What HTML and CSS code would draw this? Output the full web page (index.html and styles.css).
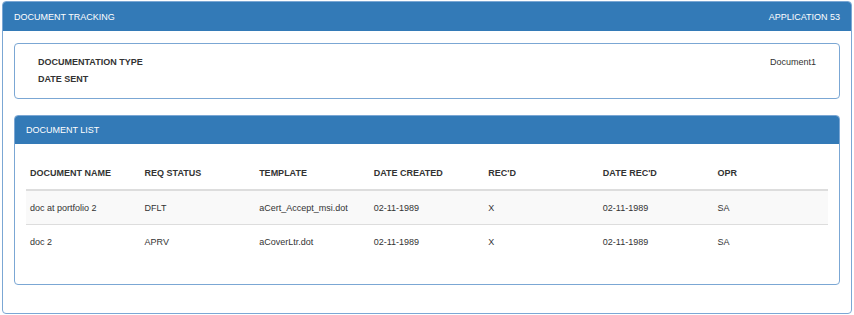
FILE: index.html
```html
<!DOCTYPE html>
<html lang="en">

<head>
    <meta charset="UTF-8">
    <meta name="viewport" content="width=device-width, initial-scale=1.0">
    <title>Document Tracking</title>
    <link rel="stylesheet" href="styles.css">
</head>

<body>

    <div class="panel panel-outer">
        <div class="panel-heading">
            <span>DOCUMENT TRACKING</span>
            <span>APPLICATION 53</span>
        </div>
        <div class="panel-body">

            <div class="panel panel-info">
                <div class="info-body">
                    <div class="info-row">
                        <span class="label">DOCUMENTATION TYPE</span>
                        <span>Document1</span>
                    </div>
                    <div class="info-row">
                        <span class="label">DATE SENT</span>
                    </div>
                </div>
            </div>

            <div class="panel panel-list">
                <div class="panel-heading">
                    <span>DOCUMENT LIST</span>
                </div>
                <div class="list-body">
                    <table class="doc-table">
                        <thead>
                            <tr>
                                <th>DOCUMENT NAME</th>
                                <th>REQ STATUS</th>
                                <th>TEMPLATE</th>
                                <th>DATE CREATED</th>
                                <th>REC'D</th>
                                <th>DATE REC'D</th>
                                <th>OPR</th>
                            </tr>
                        </thead>
                        <tbody>
                            <tr>
                                <td>doc at portfolio 2</td>
                                <td>DFLT</td>
                                <td>aCert_Accept_msi.dot</td>
                                <td>02-11-1989</td>
                                <td>X</td>
                                <td>02-11-1989</td>
                                <td>SA</td>
                            </tr>
                            <tr>
                                <td>doc 2</td>
                                <td>APRV</td>
                                <td>aCoverLtr.dot</td>
                                <td>02-11-1989</td>
                                <td>X</td>
                                <td>02-11-1989</td>
                                <td>SA</td>
                            </tr>
                        </tbody>
                    </table>
                </div>
            </div>

        </div>
    </div>

</body>

</html>
```

FILE: styles.css
```css
/* Global Styles */
body {
    font-family: 'Liberation Sans', Arial, sans-serif;
    font-size: 9px;
    color: #333;
    background-color: #fff;
    margin: 1px 2px 2px 2px;
}

/* Panels */
.panel {
    border: 1px solid #7ba7d4;
    border-radius: 4px;
    background-color: #fff;
}

.panel-heading {
    display: flex;
    justify-content: space-between;
    align-items: center;
    height: 28px;
    padding: 0 11px;
    background-color: #337ab7;
    color: #fff;
    border-radius: 3px 3px 0 0;
}

.panel-outer > .panel-heading {
    padding-top: 1px;
}

.panel-body {
    padding: 12px 11px;
}

.panel-info,
.panel-list {
    margin-bottom: 16px;
}

/* Info panel */
.info-body {
    padding: 10px 23px;
}

.info-row {
    display: flex;
    justify-content: space-between;
    line-height: 17px;
}

.label {
    font-weight: bold;
}

/* Document list */
.list-body {
    padding: 12px 11px 26px 11px;
}

.doc-table {
    width: 100%;
    border-collapse: collapse;
    table-layout: fixed;
}

.doc-table th,
.doc-table td {
    text-align: left;
    padding: 0 4px;
    height: 33px;
}

.doc-table th {
    font-weight: bold;
    border-bottom: 2px solid #ddd;
}

.doc-table td {
    border-top: 1px solid #ddd;
}

.doc-table tbody tr:first-child td {
    border-top: none;
}

.doc-table tbody tr:nth-child(odd) {
    background-color: #f9f9f9;
}
```
